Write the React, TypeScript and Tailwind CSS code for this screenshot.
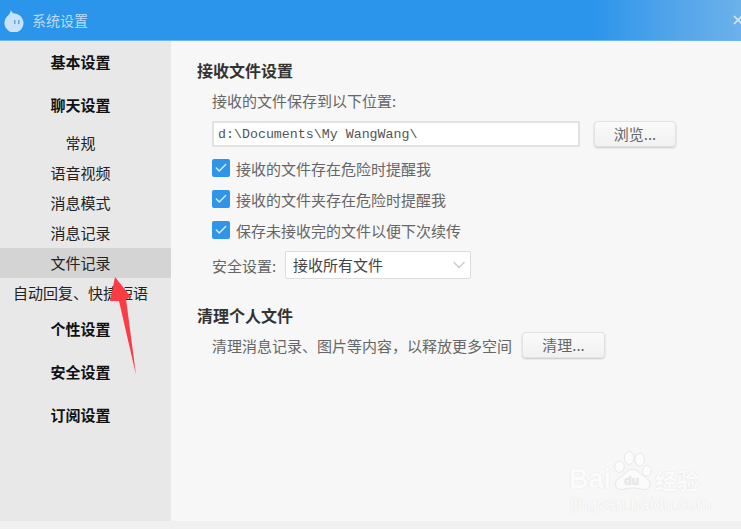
import { Check, ChevronDown, X } from "lucide-react";

const CJK = "font-['Noto_Sans_CJK_SC','Liberation_Sans',sans-serif]";

const subItems = ["常规", "语音视频", "消息模式", "消息记录", "文件记录", "自动回复、快捷短语"];

function Group({ label }: { label: string }) {
  return (
    <div className="flex h-[43px] items-center justify-center pb-[2px] pr-[10px] text-[15px] font-bold leading-none text-[#111]">
      {label}
    </div>
  );
}

function Sidebar() {
  return (
    <aside className="w-[171px] shrink-0 bg-[#e8e8e8]">
      <Group label="基本设置" />
      <Group label="聊天设置" />
      <div className="pt-px">
        {subItems.map((item) => (
          <div
            key={item}
            className={`flex h-[30px] items-center justify-center whitespace-nowrap pb-[2px] pr-[10px] text-[15px] leading-none text-[#222] ${
              item === "文件记录" ? "bg-[#d4d4d4]" : ""
            }`}
          >
            {item}
          </div>
        ))}
      </div>
      <Group label="个性设置" />
      <Group label="安全设置" />
      <Group label="订阅设置" />
    </aside>
  );
}

function CheckRow({ label, className }: { label: string; className: string }) {
  return (
    <div className={`flex items-center gap-[6px] ${className}`}>
      <span className="flex size-[18px] items-center justify-center rounded-[2px] bg-[#2f95e8]">
        <Check className="size-[14px] text-[#d8ecfb]" strokeWidth={2.5} />
      </span>
      <span className="text-[15px] leading-none text-[#666]">{label}</span>
    </div>
  );
}

function PlainButton({ label, className }: { label: string; className: string }) {
  return (
    <button
      className={`flex h-[26px] items-center justify-center rounded-[4px] border border-[#e2e2e2] bg-gradient-to-b from-[#fafafa] to-[#f1f1f1] pb-[1px] text-[15px] leading-none text-[#666] shadow-[0_1px_2px_rgba(0,0,0,0.2)] ${className}`}
    >
      {label}
    </button>
  );
}

function Settings() {
  return (
    <main className="min-w-0 flex-1 bg-[#f7f7f7] pl-[26px]">
      <h2 className="mt-[20px] text-[16px] font-bold leading-[18px] text-[#333]">接收文件设置</h2>
      <div className="pl-[15px]">
        <p className="mt-[13px] text-[15px] leading-[18px] text-[#666]">接收的文件保存到以下位置:</p>
        <div className="mt-[11px] flex items-center">
          <div className="flex h-[26px] w-[368px] items-center border-2 border-[#e2e2e2] bg-white pl-[4px] pt-[2px] font-['Liberation_Mono',monospace] text-[13.3px] leading-none text-[#555]">
            d:\Documents\My WangWang\
          </div>
          <PlainButton label="浏览..." className="ml-[14px] w-[82px]" />
        </div>
        <CheckRow label="接收的文件存在危险时提醒我" className="mt-[12px]" />
        <CheckRow label="接收的文件夹存在危险时提醒我" className="mt-[13px]" />
        <CheckRow label="保存未接收完的文件以便下次续传" className="mt-[13px]" />
        <div className="mt-[12px] flex items-center">
          <span className="w-[73px] text-[15px] leading-none text-[#666]">安全设置:</span>
          <div className="flex h-[28px] w-[186px] items-center justify-between rounded-[2px] border border-[#dcdcdc] bg-white pb-[1px] pl-[7px] pr-[1px] text-[15px] leading-none text-[#444]">
            接收所有文件
            <ChevronDown className="size-[20px] text-[#cfcfcf]" strokeWidth={2} />
          </div>
        </div>
      </div>
      <h2 className="mt-[27px] text-[16px] font-bold leading-[18px] text-[#333]">清理个人文件</h2>
      <div className="mt-[8px] flex items-center pl-[15px]">
        <span className="text-[15px] leading-none text-[#666]">清理消息记录、图片等内容，以释放更多空间</span>
        <PlainButton label="清理..." className="ml-[10px] w-[83px]" />
      </div>
    </main>
  );
}

function RedArrow() {
  return (
    <svg className="absolute left-[100px] top-[270px]" width="40" height="110" viewBox="0 0 40 110">
      <polygon points="15,7 31,27 26,29 36,105 19,31 10,31" fill="#fb3c45" />
    </svg>
  );
}

function Watermark() {
  return (
    <div className="absolute left-[567px] top-[446px] h-[72px] w-[165px] select-none font-['Liberation_Sans',sans-serif] text-[#fbfbfb] [text-shadow:0_0_1px_#e4e4e4,0_0_1px_#e4e4e4]">
      <span className="absolute left-[2px] top-[20px] text-[27px] font-bold leading-none">Bai</span>
      <svg className="absolute left-[42px] top-[1px]" width="50" height="46" viewBox="0 0 62 52">
        <g fill="#fbfbfb" stroke="#e6e6e6" strokeWidth="1.2">
          <ellipse cx="13" cy="22" rx="6" ry="7" />
          <ellipse cx="25" cy="11" rx="6" ry="8" />
          <ellipse cx="38" cy="13" rx="6" ry="8" />
          <ellipse cx="47" cy="27" rx="5.500" ry="6.500" />
          <path d="M8 44c0-8 9-9 13-15 4-5 12-5 16 0 4 5 14 7 14 15 0 7-9 7-14 5-5-1-10-1-15 0-6 2-14 2-14-5z" />
        </g>
        <text x="19" y="45" fontSize="15" fontWeight="700" fill="#e8e8e8" stroke="none">du</text>
      </svg>
      <span className={`absolute left-[88px] top-[22px] text-[22px] font-bold leading-none ${CJK}`}>经验</span>
      <span className="absolute left-[3px] top-[50px] text-[17.500px] leading-none">jingyan.baidu.com</span>
    </div>
  );
}

export default function App() {
  return (
    <div className={`relative flex h-[529px] w-[741px] flex-col overflow-hidden bg-[#f0f0f0] ${CJK}`}>
      <header className="flex h-[41px] shrink-0 items-center justify-between border-b border-[#6db6f0] bg-gradient-to-r from-[#2a95ea] from-[80%] to-[#6cb1ea] pl-[3px]">
        <div className="flex items-center gap-[7px]">
          <svg width="22" height="24" viewBox="0 0 22 24">
            <path d="M8 2c1 3 2 3 4 3.600a9.500 9.500 0 1 1-8 3c2-2 3-3 4-6.600z" fill="#c9e2f7" />
            <rect x="11" y="12" width="1.500" height="4" fill="#5aa8e6" />
            <rect x="15" y="12" width="1.500" height="4" fill="#5aa8e6" />
          </svg>
          <span className="text-[14px] leading-none text-[#bcdcf7]">系统设置</span>
        </div>
        <X className="-mr-[4px] size-[14px] text-[#cfe5f8]" strokeWidth={3} />
      </header>
      <div className="flex h-[480px] shrink-0">
        <Sidebar />
        <Settings />
      </div>
      <RedArrow />
      <Watermark />
    </div>
  );
}
